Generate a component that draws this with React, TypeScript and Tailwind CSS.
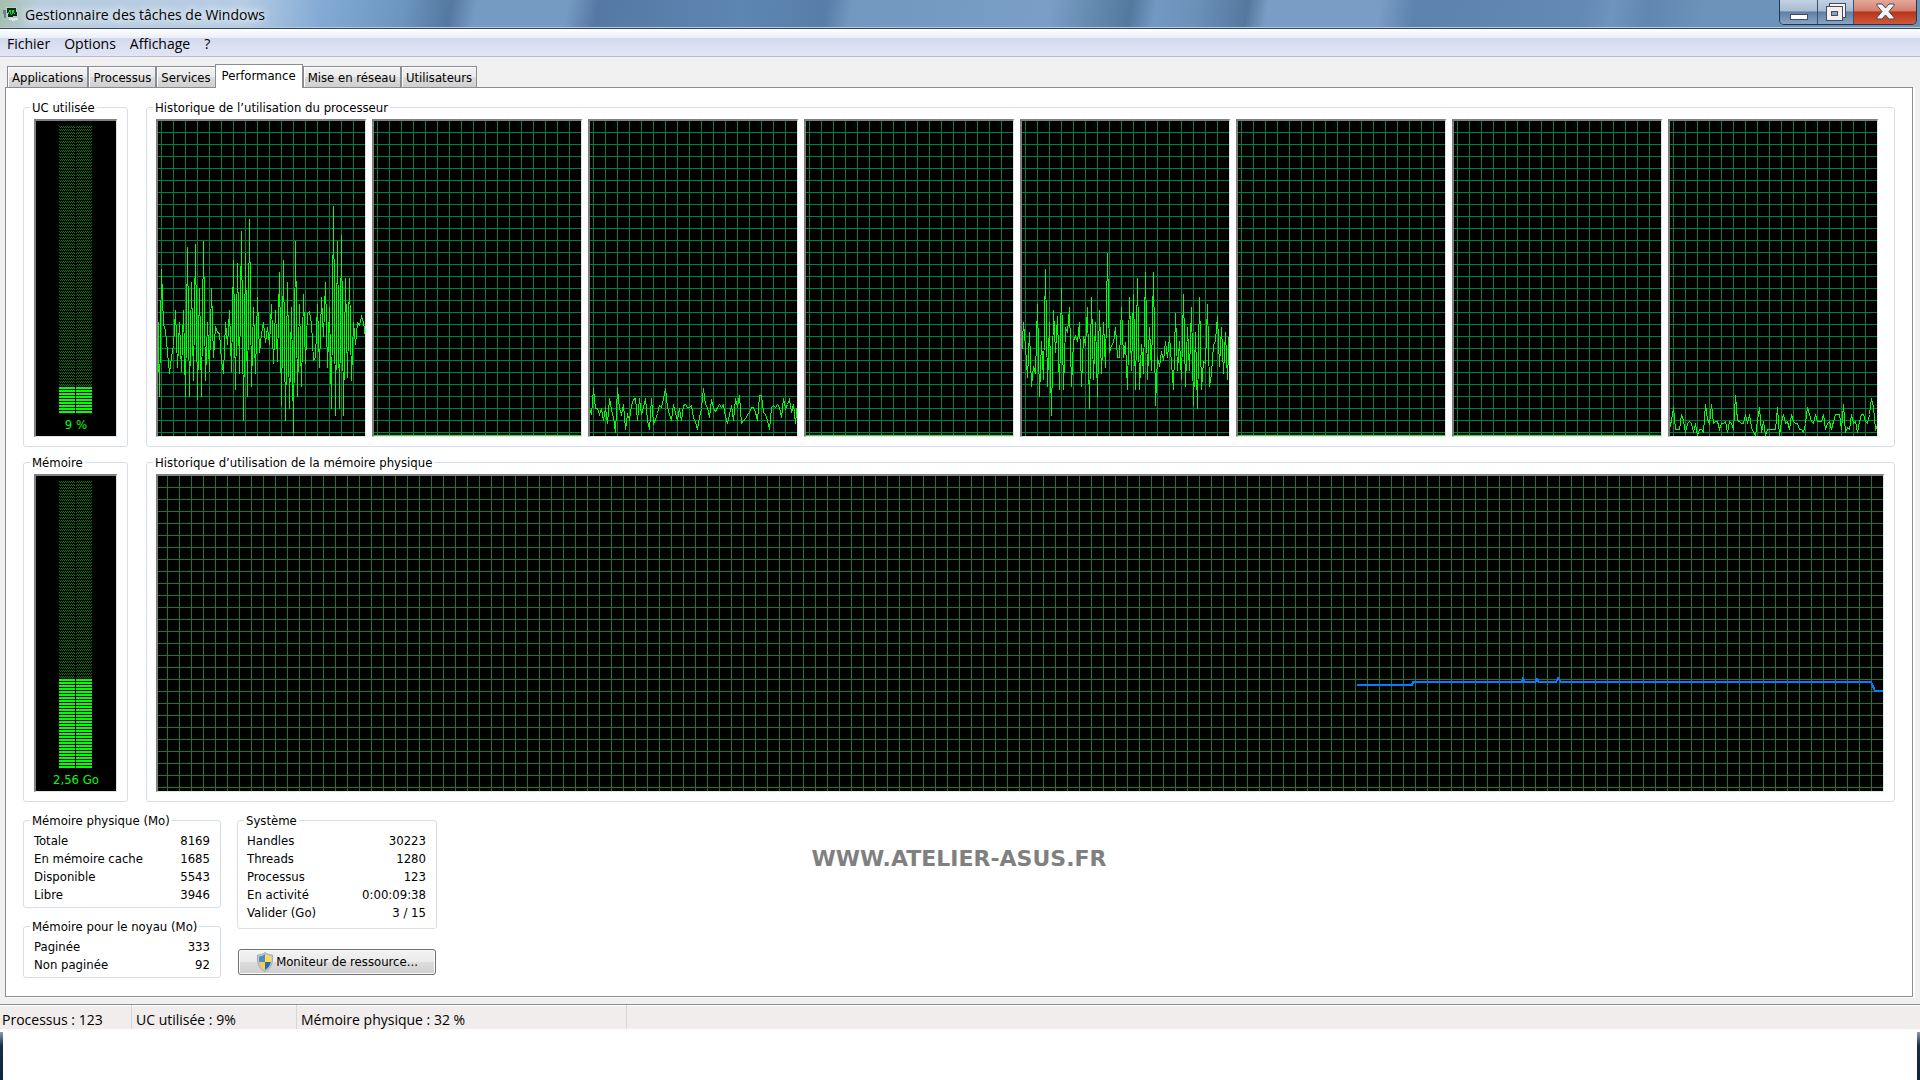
import React, { useId, useState } from 'react';

// Samples are 2px apart, measured down from the top of the plot.
const CORE_0 = [176, 275, 148, 203, 209, 231, 252, 236, 224, 189, 246, 201, 250, 189, 275, 126, 275, 161, 259, 123, 278, 167, 275, 120, 259, 201, 250, 167, 236, 205, 211, 212, 239, 252, 201, 223, 189, 250, 139, 268, 142, 252, 110, 299, 132, 275, 98, 265, 186, 252, 176, 231, 212, 201, 221, 206, 223, 183, 242, 189, 240, 151, 284, 139, 299, 161, 287, 186, 311, 120, 275, 183, 265, 173, 242, 192, 190, 202, 239, 236, 183, 246, 176, 215, 161, 246, 186, 287, 85, 294, 120, 287, 114, 294, 157, 256, 157, 259, 201, 223, 201, 204, 195, 201, 216];
const CORE_2 = [287, 293, 267, 287, 287, 293, 287, 299, 286, 302, 277, 288, 296, 311, 267, 287, 293, 283, 308, 293, 298, 284, 278, 277, 299, 277, 293, 286, 277, 299, 308, 277, 302, 298, 292, 284, 286, 277, 267, 286, 293, 299, 283, 292, 299, 287, 299, 284, 283, 286, 286, 284, 296, 301, 308, 296, 287, 267, 283, 286, 296, 278, 287, 290, 286, 283, 286, 283, 295, 302, 293, 284, 299, 277, 286, 274, 302, 299, 298, 293, 291, 286, 286, 291, 299, 274, 274, 291, 293, 299, 308, 286, 284, 286, 283, 286, 296, 277, 287, 283, 278, 291, 283, 302, 282];
const CORE_4 = [237, 201, 226, 256, 211, 265, 245, 252, 183, 275, 220, 258, 148, 265, 201, 294, 189, 231, 195, 268, 167, 268, 206, 211, 186, 265, 219, 215, 220, 201, 265, 215, 224, 186, 287, 176, 258, 201, 275, 189, 252, 201, 246, 132, 231, 224, 221, 206, 236, 236, 186, 236, 221, 268, 176, 249, 173, 268, 157, 268, 223, 252, 151, 258, 206, 249, 151, 284, 236, 245, 230, 239, 220, 236, 215, 242, 268, 192, 249, 220, 258, 173, 265, 206, 249, 186, 284, 211, 287, 176, 268, 240, 242, 183, 265, 252, 224, 219, 195, 245, 206, 252, 211, 258, 202];
const CORE_7 = [307, 299, 286, 308, 308, 308, 293, 299, 311, 302, 300, 302, 311, 302, 314, 308, 308, 311, 283, 298, 302, 283, 302, 300, 300, 308, 302, 302, 300, 311, 300, 302, 308, 274, 299, 300, 302, 302, 293, 302, 293, 306, 311, 314, 299, 286, 311, 300, 314, 308, 308, 308, 308, 308, 286, 314, 300, 293, 302, 300, 308, 293, 300, 302, 302, 308, 308, 311, 302, 286, 293, 300, 302, 293, 300, 300, 300, 293, 308, 302, 300, 308, 300, 293, 293, 293, 308, 283, 311, 306, 308, 293, 302, 300, 311, 300, 293, 293, 300, 302, 293, 277, 286, 308, 304];
const IDLE = Array.from({ length: 105 }, () => 314);

const cores = [CORE_0, IDLE, CORE_2, IDLE, CORE_4, IDLE, IDLE, CORE_7];

const tabs = ['Applications', 'Processus', 'Services', 'Performance', 'Mise en réseau', 'Utilisateurs'];

const TaskManagerIcon: React.FC = () => (
    <svg width="16" height="16" viewBox="0 0 16 16" shapeRendering="crispEdges" aria-hidden="true">
        <path d="M0 4h3v8H1z" fill="#6f7f86" />
        <path d="M3 1h11l1 10-11 1z" fill="#c5cfc8" />
        <path d="M4 2h9l1 8-9 1z" fill="#0b3015" />
        <path d="M5 8l2-4 1 4h1l1-4 1 3 1 1" fill="none" stroke="#1fd14b" strokeWidth="1" />
        <path d="M6 12h8l2 1-5 2-5-1z" fill="#e3e6e8" />
    </svg>
);

const ShieldIcon: React.FC = () => (
    <svg width="18" height="20" viewBox="0 0 18 20" aria-hidden="true">
        <path d="M9 .5c2 1.700 4.500 2.500 7.500 2.500C17 10 16 16 9 19.500 2 16 1 10 1.500 3 4.500 3 7 2.200 9 .5z" fill="#c3c9cf" stroke="#a3abb2" strokeWidth="1" />
        <path d="M9 2.200C7.300 3.500 5.300 4.200 3 4.400c-.1 2-.1 3.800.2 5.600H9z" fill="#4b8ad0" />
        <path d="M9 2.200c1.700 1.300 3.700 2 6 2.200.1 2 .1 3.800-.2 5.600H9z" fill="#fbdc4e" />
        <path d="M3.200 10c.6 3.400 2.300 6 5.800 7.900V10z" fill="#f5cf3e" />
        <path d="M14.800 10c-.6 3.400-2.300 6-5.800 7.900V10z" fill="#2a68b4" />
    </svg>
);

const WindowControls: React.FC = () => (
    <div className="flex h-[25px] mr-[3px] overflow-hidden rounded-b-[5px] border border-t-0 border-[#27364a]">
        <button
            type="button"
            aria-label="Réduire"
            className="flex w-[38px] items-end justify-center border-r border-[#3c4f68] bg-[linear-gradient(#c3d1e2,#a9bcd3_45%,#5f7fa3_50%,#87a5c5)] pb-1"
        >
            <svg width="18" height="6" viewBox="0 0 18 6" shapeRendering="crispEdges" aria-hidden="true">
                <rect x=".5" y=".5" width="17" height="5" fill="#fff" stroke="#4a4a5a" />
            </svg>
        </button>
        <button
            type="button"
            aria-label="Niveau inférieur"
            className="flex w-[36px] items-start justify-center border-r border-[#3c4f68] bg-[linear-gradient(#c3d1e2,#a9bcd3_45%,#5f7fa3_50%,#87a5c5)] pt-[3px]"
        >
            <svg width="20" height="18" viewBox="0 0 20 18" shapeRendering="crispEdges" aria-hidden="true">
                <rect x="3.500" y=".5" width="16" height="14" fill="#f4f4f4" stroke="#4a4a5a" />
                <rect x=".5" y="3.500" width="16" height="14" fill="#f0f0f0" stroke="#4a4a5a" />
                <rect x="5.500" y="8.500" width="6" height="4" fill="#8aa3c0" stroke="#4a4a5a" />
            </svg>
        </button>
        <button
            type="button"
            aria-label="Fermer"
            className="flex w-[62px] items-start justify-center bg-[linear-gradient(#e3a89c,#d3806f_45%,#b8331a_50%,#cf5a3c)] pt-[3px]"
        >
            <svg width="19" height="17" viewBox="0 0 19 17" aria-hidden="true">
                <path d="M1 1h5l3.500 4L13 1h5v1.500L13 8.500l5 6V16h-5l-3.500-4L6 16H1v-1.500l5-6-5-6z" fill="#f4f4f4" stroke="#4d4658" strokeWidth="1" />
            </svg>
        </button>
    </div>
);

interface GroupProps {
    title: string;
    className?: string;
    bodyClassName: string;
    children: React.ReactNode;
}

const Group: React.FC<GroupProps> = ({ title, className = '', bodyClassName, children }) => (
    <fieldset className={`min-w-0 rounded-[3px] border border-[#d5dfe5] ${className}`}>
        <legend className="ml-[6px] px-[2px] pt-[2px] leading-4">{title}</legend>
        <div className={bodyClassName}>{children}</div>
    </fieldset>
);

const Meter: React.FC<{ lit: number; label: string }> = ({ lit, label }) => {
    const id = useId();
    const litHeight = lit * 3 - 1;

    return (
        <div className="flex h-[318px] w-[83px] flex-col items-center border-t-2 border-r border-b border-l-2 border-t-[#808080] border-r-[#e3e3e3] border-b-[#e3e3e3] border-l-[#808080] bg-black pt-[5px] text-[#00ff00]">
            <svg width="34" height="287" shapeRendering="crispEdges" aria-hidden="true">
                <defs>
                    <pattern id={`${id}-off`} width="2" height="3" patternUnits="userSpaceOnUse">
                        <rect width="1" height="1" fill="#008000" />
                        <rect x="1" y="1" width="1" height="1" fill="#008000" />
                    </pattern>
                    <pattern id={`${id}-on`} width="2" height="3" patternUnits="userSpaceOnUse">
                        <rect width="2" height="2" fill="#00ff00" />
                    </pattern>
                </defs>
                {[0, 17].map((x) => (
                    <g key={x}>
                        <rect x={x} width="16" height={287 - litHeight} fill={`url(#${id}-off)`} />
                        <rect x={x} y={287 - litHeight} width="16" height={litHeight} fill={`url(#${id}-on)`} />
                    </g>
                ))}
            </svg>
            <span className="mt-1 leading-4">{label}</span>
        </div>
    );
};

const CpuGraph: React.FC<{ samples: number[] }> = ({ samples }) => {
    const points = samples.map((y, i) => `${i * 2 - 0.5},${y + 0.5}`).join(' ');

    return (
        <div className="h-[318px] min-w-0 flex-1 overflow-hidden border-t-2 border-r border-b border-l-2 border-t-[#808080] border-r-[#e3e3e3] border-b-[#e3e3e3] border-l-[#808080] bg-black bg-[linear-gradient(#008040_1px,transparent_1px),linear-gradient(90deg,#008040_1px,transparent_1px)] bg-[size:12px_12px] bg-[position:3px_11px]">
            <svg width="100%" height="315" shapeRendering="crispEdges" aria-hidden="true">
                <polyline points={points} fill="none" stroke="#00ff00" strokeWidth="1" />
            </svg>
        </div>
    );
};

const MemoryGraph: React.FC = () => (
    <div className="flex h-[318px] justify-end overflow-hidden border-t-2 border-r border-b border-l-2 border-t-[#808080] border-r-[#e3e3e3] border-b-[#e3e3e3] border-l-[#808080] bg-black bg-[linear-gradient(#008040_1px,transparent_1px),linear-gradient(90deg,#008040_1px,transparent_1px)] bg-[size:12px_12px] bg-[position:9px_11px]">
        <svg width="526" height="315" viewBox="0 0 526 315" shapeRendering="crispEdges" aria-hidden="true">
            <path
                d="M0 209h55l1-3h109l1-3 2 3h10l2-3 2 3h17l2-4 3 4h310l4 9h8"
                fill="none"
                stroke="#0080ff"
                strokeWidth="2"
            />
        </svg>
    </div>
);

const StatTable: React.FC<{ rows: [string, string][] }> = ({ rows }) => (
    <table className="w-full">
        <tbody>
            {rows.map(([label, value]) => (
                <tr key={label} className="h-[18px] leading-[18px]">
                    <th scope="row" className="p-0 text-left font-normal">{label}</th>
                    <td className="p-0 text-right">{value}</td>
                </tr>
            ))}
        </tbody>
    </table>
);

const App: React.FC = () => {
    const [activeTab, setActiveTab] = useState('Performance');

    return (
        <div className="flex min-h-screen flex-col bg-[#f0f0f0] font-['DejaVu_Sans_Condensed','DejaVu_Sans',sans-serif] text-[13px] text-black">
            <header className="flex h-[29px] items-start justify-between border-b border-[#36455a] bg-[linear-gradient(100deg,#a3bfae_0px,#b9cde0_40px,#b6cce4_240px,#82aad5_320px,#6b94bf_400px,#54789f_445px,#769bc2_470px,#769bc2_560px,#5478a3_590px,#5e86b3_730px,#567ea8_815px,#7298c0_840px,#7a9ec5_1035px,#53799f_1115px,#7299c2_1140px,#6b91b9_1180px,#55789f_1230px,#799dc5_1250px,#799dc5_1360px,#5c82ae_1395px,#6389b5_1560px,#6e95bd_1590px,#5f87b0_1625px,#6c93ba_1680px,#6c93ba)] shadow-[inset_0_-1px_0_#b9cbe0]">
                <div className="flex h-[28px] items-center gap-[6px] pl-[3px]">
                    <TaskManagerIcon />
                    <h1 className="font-['Open_Sans',sans-serif] text-[14px] [text-shadow:0_0_8px_#fff,0_0_12px_#fff]">
                        Gestionnaire des tâches de Windows
                    </h1>
                </div>
                <WindowControls />
            </header>

            <nav className="flex h-[28px] items-center gap-[14px] border-b border-[#b6bccc] bg-[linear-gradient(#fff,#e9eef8_9px,#d4daed_9px,#e1e6f6)] px-[7px] pt-px font-['Open_Sans',sans-serif] text-[14px]">
                <button type="button">Fichier</button>
                <button type="button">Options</button>
                <button type="button">Affichage</button>
                <button type="button">?</button>
            </nav>

            <div className="flex h-[30px] items-end pl-[7px]" role="tablist">
                {tabs.map((tab) => (
                    <button
                        key={tab}
                        type="button"
                        role="tab"
                        aria-selected={tab === activeTab}
                        onClick={() => setActiveTab(tab)}
                        className={
                            tab === activeTab
                                ? 'relative z-10 h-[24px] -mb-px -ml-px border border-b-0 border-[#898c95] bg-white px-[6px] pb-[2px]'
                                : 'h-[21px] border border-b-0 border-[#898c95] bg-[linear-gradient(#f2f2f2,#ebebeb_50%,#dddddd_50%,#cfcfcf)] px-[4px] pt-px shadow-[inset_1px_1px_0_#fff]'
                        }
                    >
                        {tab}
                    </button>
                ))}
            </div>

            <main className="mr-[7px] ml-[5px] flex flex-col gap-[6px] border border-[#898c95] bg-white px-[17px] pt-[10px] pb-[18px] shadow-[2px_1px_0_#fff]">
                <div className="flex gap-[18px]">
                    <Group title="UC utilisée" bodyClassName="px-[10px] pt-[3px] pb-[9px]">
                        <Meter lit={9} label="9 %" />
                    </Group>
                    <Group
                        title="Historique de l’utilisation du processeur"
                        className="flex-1"
                        bodyClassName="flex gap-[6px] pt-[3px] pr-[16px] pb-[9px] pl-[9px]"
                    >
                        {cores.map((samples, i) => (
                            <CpuGraph key={i} samples={samples} />
                        ))}
                    </Group>
                </div>

                <div className="flex gap-[18px]">
                    <Group title="Mémoire" bodyClassName="px-[10px] pt-[3px] pb-[9px]">
                        <Meter lit={30} label="2,56 Go" />
                    </Group>
                    <Group
                        title="Historique d’utilisation de la mémoire physique"
                        className="flex-1"
                        bodyClassName="pt-[3px] pr-[10px] pb-[9px] pl-[9px]"
                    >
                        <MemoryGraph />
                    </Group>
                </div>

                <div className="mt-[3px] grid grid-cols-[1fr_auto_1fr]">
                    <div className="flex gap-4">
                        <div className="flex w-[198px] flex-col gap-[9px]">
                            <Group title="Mémoire physique (Mo)" bodyClassName="px-[10px] pt-[3px] pb-[3px]">
                                <StatTable
                                    rows={[
                                        ['Totale', '8169'],
                                        ['En mémoire cache', '1685'],
                                        ['Disponible', '5543'],
                                        ['Libre', '3946'],
                                    ]}
                                />
                            </Group>
                            <Group title="Mémoire pour le noyau (Mo)" bodyClassName="px-[10px] pt-[3px] pb-[3px]">
                                <StatTable
                                    rows={[
                                        ['Paginée', '333'],
                                        ['Non paginée', '92'],
                                    ]}
                                />
                            </Group>
                        </div>
                        <div className="flex w-[200px] flex-col gap-5">
                            <Group title="Système" bodyClassName="pt-[3px] pr-[10px] pb-[6px] pl-[9px]">
                                <StatTable
                                    rows={[
                                        ['Handles', '30223'],
                                        ['Threads', '1280'],
                                        ['Processus', '123'],
                                        ['En activité', '0:00:09:38'],
                                        ['Valider (Go)', '3 / 15'],
                                    ]}
                                />
                            </Group>
                            <button
                                type="button"
                                className="mx-px flex h-[26px] items-center justify-center gap-[2px] rounded-[3px] border border-[#707070] bg-[linear-gradient(#f2f2f2,#ebebeb_50%,#dddddd_50%,#cfcfcf)] shadow-[inset_0_0_0_1px_#fcfcfc]"
                            >
                                <ShieldIcon />
                                Moniteur de ressource...
                            </button>
                        </div>
                    </div>
                    <p className="pt-9 font-['DejaVu_Sans',sans-serif] text-[22px] leading-6 font-bold text-[#808080]">
                        WWW.ATELIER-ASUS.FR
                    </p>
                </div>
            </main>

            <footer className="mt-[7px] flex h-[25px] border-t border-[#8c8c8c] bg-[#f1eded] pl-px font-['Open_Sans',sans-serif] text-[14px] leading-[29px] shadow-[inset_0_1px_0_#fff]">
                <span className="w-[131px] border-r border-[#d7d7d7] pl-px">Processus : 123</span>
                <span className="w-[165px] border-r border-[#d7d7d7] pl-1">UC utilisée : 9%</span>
                <span className="w-[330px] border-r border-[#d7d7d7] pl-1">Mémoire physique : 32 %</span>
            </footer>

            <div className="flex flex-1 justify-between bg-white pt-[3px]">
                <div className="w-[3px] bg-[linear-gradient(#8b9bb3,#1b2c48_14px,#10233f)]" />
                <div className="w-[3px] bg-[linear-gradient(#8b9bb3,#1b2c48_14px,#10233f)]" />
            </div>
        </div>
    );
};

export default App;
